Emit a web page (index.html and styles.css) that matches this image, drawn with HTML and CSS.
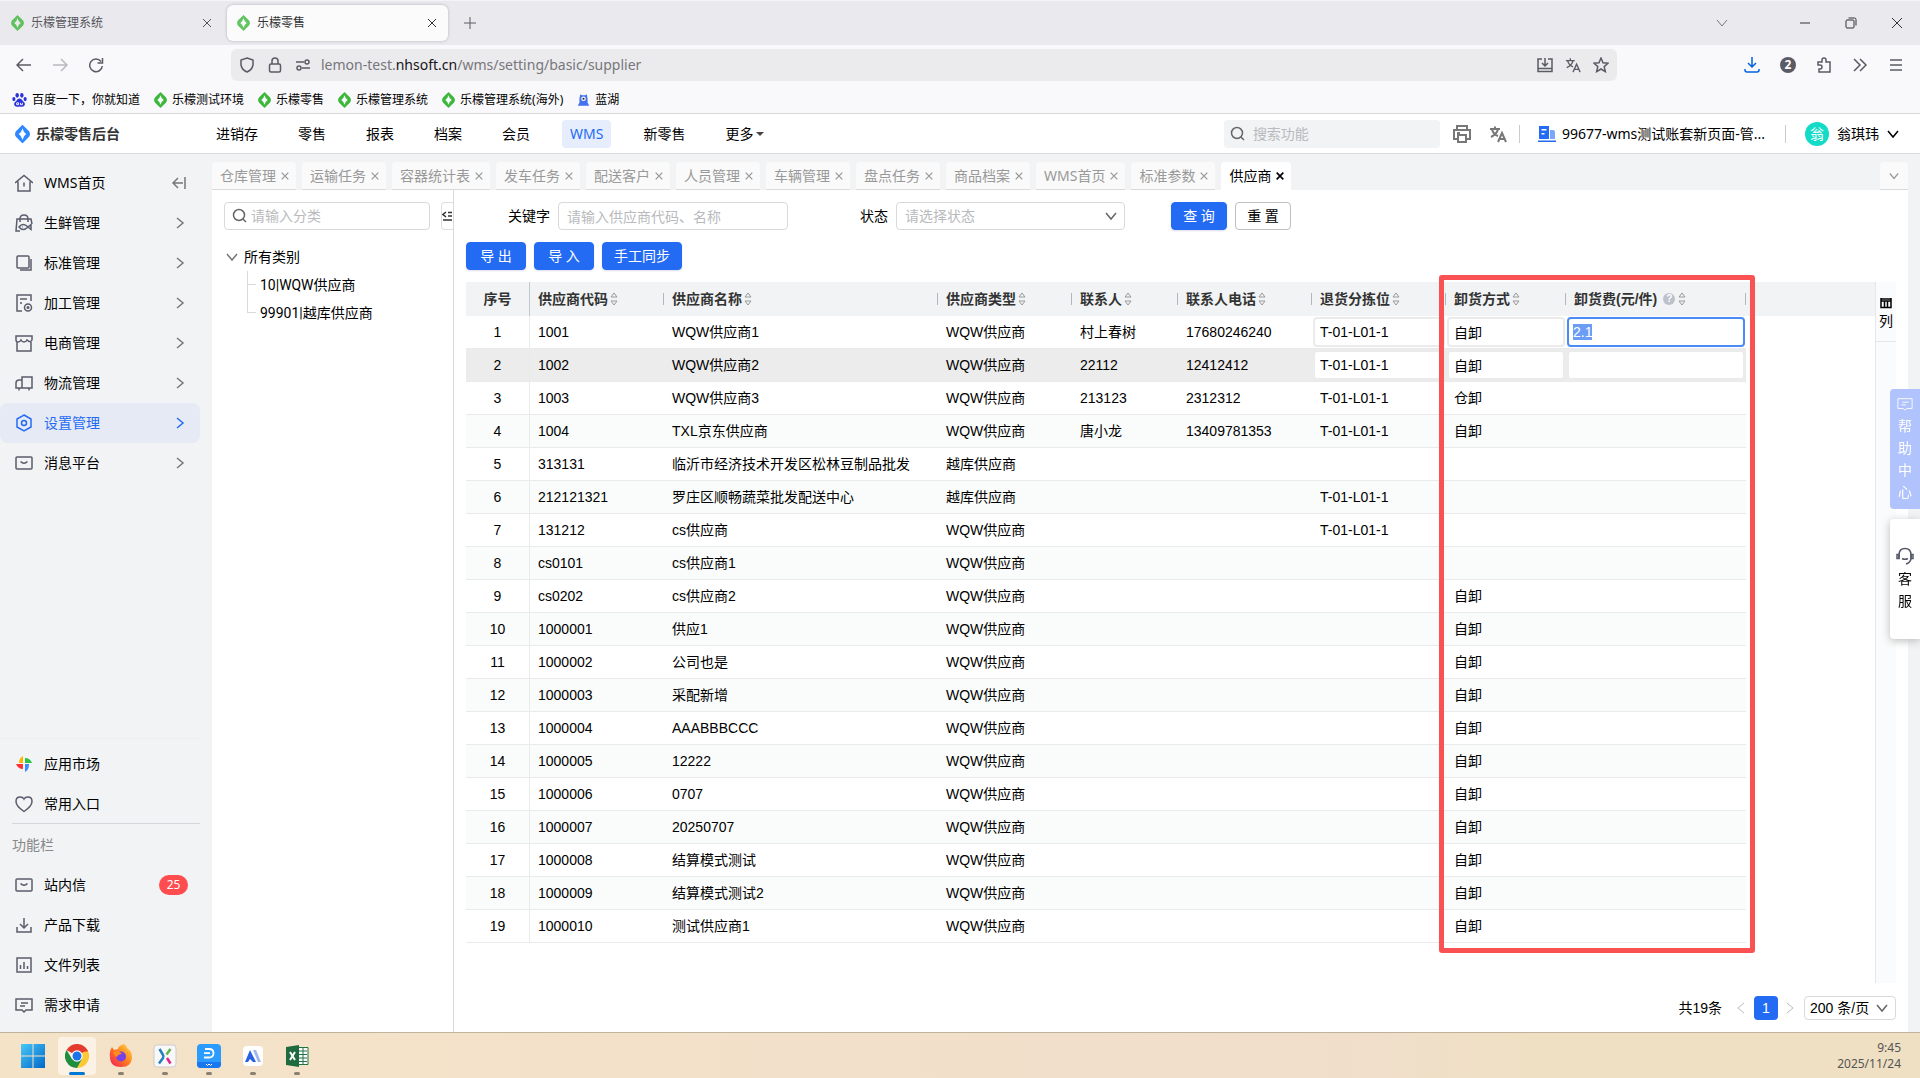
FILE: index.html
```html
<!DOCTYPE html>
<html lang="zh-CN">
<head>
<meta charset="utf-8">
<meta name="viewport" content="width=device-width, initial-scale=1">
<title>乐檬零售</title>
<link rel="stylesheet" href="styles.css">
</head>
<body>
<svg class="sprite" aria-hidden="true">
  <symbol id="lemon" viewBox="0 0 16 20"><path fill-rule="evenodd" d="M8 0l7 7q2 3 0 6l-7 7-7-7q-2-3 0-6zM8 4q-1 4-4 6 3 2 4 6 1-4 4-6-3-2-4-6z"/></symbol>
  <symbol id="x" viewBox="0 0 12 12"><path d="M2 2l8 8M10 2l-8 8"/></symbol>
  <symbol id="down" viewBox="0 0 12 12"><path d="M1 3l5 6 5-6"/></symbol>
  <symbol id="right" viewBox="0 0 12 12"><path d="M3 1l6 5-6 5"/></symbol>
  <symbol id="left" viewBox="0 0 12 12"><path d="M9 1L3 6l6 5"/></symbol>
  <symbol id="search" viewBox="0 0 16 16"><circle cx="7" cy="7" r="5.5"/><path d="M11 11l3 3"/></symbol>
  <symbol id="translate" viewBox="0 0 18 18"><path d="M1 4h10M6 1.500v2.500M3 4q1 5 6 7M9 4q-1 5-7 8M9 17l4-9 4 9M10.500 14h5"/></symbol>
  <symbol id="sort" viewBox="0 0 8 14"><path d="M1 5l3-4 3 4zM1 9l3 4 3-4z"/></symbol>
  <symbol id="mail" viewBox="0 0 18 18"><rect x="1" y="3" width="16" height="12" rx="1"/><path d="M5.500 7.500q3.500 3.500 7 0"/></symbol>
  <symbol id="note" viewBox="0 0 18 18"><path d="M1 3h16v11h-6l-2 2-2-2H1zM6 7h7M5 10h5"/></symbol>
</svg>

<header class="browser">
  <div class="tabstrip">
    <div class="btab"><svg class="fav"><use href="#lemon"/></svg><span>乐檬管理系统</span><svg class="i12 end"><use href="#x"/></svg></div>
    <div class="btab current"><svg class="fav"><use href="#lemon"/></svg><span>乐檬零售</span><svg class="i12 end"><use href="#x"/></svg></div>
    <button class="plain newtab" aria-label="新标签页"><svg class="i14" viewBox="0 0 14 14"><path d="M7 1v12M1 7h12"/></svg></button>
    <div class="winctl">
      <svg class="i12 listall"><use href="#down"/></svg>
      <svg class="i12" viewBox="0 0 12 12"><path d="M1 6h10"/></svg>
      <svg class="i12" viewBox="0 0 12 12"><rect x="1" y="3" width="8" height="8" rx="1"/><path d="M3.500 1h6q1.500 0 1.500 1.500v6"/></svg>
      <svg class="i12" viewBox="0 0 12 12"><path d="M1 1l10 10M11 1L1 11"/></svg>
    </div>
  </div>
  <div class="toolbar">
    <div class="navbtns">
      <svg class="i16" viewBox="0 0 16 16"><path d="M15 8H1M7 2L1 8l6 6"/></svg>
      <svg class="i16 dim" viewBox="0 0 16 16"><path d="M1 8h14M9 2l6 6-6 6"/></svg>
      <svg class="i16" viewBox="0 0 16 16"><path d="M13 4.500A6.300 6.300 0 1 0 14.300 9M14.500 1v5h-5"/></svg>
    </div>
    <div class="urlbar">
      <svg class="i16" viewBox="0 0 16 16"><path d="M8 1l6 2v5q-1 5-6 7-5-2-6-7V3z"/></svg>
      <svg class="i16" viewBox="0 0 16 16"><rect x="2.500" y="7" width="11" height="8" rx="1.500"/><path d="M5 7V4q0-3 3-3t3 3v3"/></svg>
      <svg class="i16" viewBox="0 0 16 16"><path d="M1 5h8M7 11h8M1 5"/><circle cx="12" cy="5" r="2"/><circle cx="4" cy="11" r="2"/></svg>
      <div class="url">lemon-test.<b>nhsoft.cn</b>/wms/setting/basic/supplier</div>
      <svg class="i16" viewBox="0 0 16 16"><path d="M5 2H1v12.500h14V2h-4M1 11.500h14M8 1v7M5 6l3 3 3-3"/></svg>
      <svg class="i16"><use href="#translate"/></svg>
      <svg class="i16" viewBox="0 0 16 16"><path d="M8 1l2 4.700 5 .5-3.800 3.400 1.100 5L8 12l-4.300 2.600 1.100-5L1 6.200l5-.5z"/></svg>
    </div>
    <div class="tools">
      <svg class="i16 blue" viewBox="0 0 16 16"><path d="M8 0v10M4 6l4 4 4-4M1 12v1q0 2 2 2h10q2 0 2-2v-1"/></svg>
      <span class="count">2</span>
      <svg class="i16" viewBox="0 0 16 16"><path d="M2 5h4V3q0-2 2-2t2 2v2h4v10H3v-3h1q2 0 2-2t-2-2H2z"/></svg>
      <svg class="i16" viewBox="0 0 16 16"><path d="M2 2l6 6-6 6M8 2l6 6-6 6"/></svg>
      <svg class="i16" viewBox="0 0 16 16"><path d="M2 3h12M2 8h12M2 13h12"/></svg>
    </div>
  </div>
  <nav class="bookmarks">
    <a href="#"><svg class="fav baidu" viewBox="0 0 16 16"><ellipse cx="5.500" cy="3" rx="1.800" ry="2.500"/><ellipse cx="10.500" cy="3" rx="1.800" ry="2.500"/><ellipse cx="2" cy="7" rx="1.700" ry="2.200"/><ellipse cx="14" cy="7" rx="1.700" ry="2.200"/><path d="M8 6.500q2 0 3.500 2.500 3 2 2 4.500-1.500 2.500-5.500 1.500-4 1-5.500-1.500-1-2.500 2-4.500Q6 6.500 8 6.500z"/><path d="M5 11h2v2H5zM9 11v2h2v-2" fill="none" stroke="#fff"/></svg>百度一下，你就知道</a>
    <a href="#"><svg class="fav"><use href="#lemon"/></svg>乐檬测试环境</a>
    <a href="#"><svg class="fav"><use href="#lemon"/></svg>乐檬零售</a>
    <a href="#"><svg class="fav"><use href="#lemon"/></svg>乐檬管理系统</a>
    <a href="#"><svg class="fav"><use href="#lemon"/></svg>乐檬管理系统(海外)</a>
    <a href="#"><svg class="fav lanhu" viewBox="0 0 16 16"><path d="M4 1l2 1h4l2-1 1 5v5l2 4H1l2-4V6z"/><circle cx="8" cy="6.500" r="2.800" fill="#fff"/><circle cx="8" cy="6.500" r="1.300" fill="#223"/></svg>蓝湖</a>
  </nav>
</header>

<div class="apphead">
  <a class="brand" href="#"><svg viewBox="0 0 16 20"><use href="#lemon"/></svg>乐檬零售后台</a>
  <nav class="mainnav">
    <a href="#">进销存</a><a href="#">零售</a><a href="#">报表</a><a href="#">档案</a><a href="#">会员</a><a href="#" class="on">WMS</a><a href="#">新零售</a><a href="#">更多<i class="caret"></i></a>
  </nav>
  <div class="headright">
    <label class="fsearch"><svg class="i16"><use href="#search"/></svg><input type="text" placeholder="搜索功能" aria-label="搜索功能"></label>
    <button class="plain" aria-label="打印"><svg class="i18" viewBox="0 0 18 18"><path d="M4 5V1h10v4M4 14H1V5h16v9h-3M5 10h8v7H5zM4 8h3"/></svg></button>
    <button class="plain" aria-label="语言"><svg class="i18"><use href="#translate"/></svg></button>
    <i class="vline"></i>
    <a class="org" href="#"><svg class="i18 solid" viewBox="0 0 18 18"><path fill-rule="evenodd" d="M1 1h10v13H1zM3.500 4v1.500h5V4zm0 4v1.500h3V8zM0 15.500h18V17H0z"/><path opacity=".6" d="M12 5h3q2 0 2 2v7h-5z"/></svg>99677-wms测试账套新页面-管...</a>
    <i class="vline"></i>
    <button class="plain user"><span class="avatar">翁</span>翁琪玮<svg class="i12"><use href="#down"/></svg></button>
  </div>
</div>

<div class="app">
  <aside class="side">
    <nav>
      <a href="#"><svg class="i18" viewBox="0 0 18 18"><path d="M0 9l9-7.500L18 9M3 7.500V17h12V7.500M9 8.500v4"/></svg>WMS首页<svg class="i14 tail" viewBox="0 0 14 14"><path d="M13 1v12M11 7H1M6 2L1 7l5 5"/></svg></a>
      <a href="#"><svg class="i18" viewBox="0 0 18 18"><path d="M5 17H1L2 5h14l1 5M5 8V5q0-4 4-4t4 4v3"/><path d="M4 13q4-5 9 0l3-2.500v5L13 13q-5 5-9 0zM7 13h.5"/></svg>生鲜管理<svg class="i12 tail"><use href="#right"/></svg></a>
      <a href="#"><svg class="i18" viewBox="0 0 18 18"><rect x="2" y="2" width="12" height="12" rx="1"/><path d="M16 5v11H5"/></svg>标准管理<svg class="i12 tail"><use href="#right"/></svg></a>
      <a href="#"><svg class="i18" viewBox="0 0 18 18"><path d="M7 17H2V1h14v6M5 5h7M5 9h2"/><circle cx="13" cy="13.500" r="3.500"/><circle cx="13" cy="13.500" r=".8"/></svg>加工管理<svg class="i12 tail"><use href="#right"/></svg></a>
      <a href="#"><svg class="i18" viewBox="0 0 18 18"><path d="M1 2h16v4q-1 2-3 1.500L12 6q-1 2-3 2T6 6q-1 2-3 2T1 6zM2 8v9h14V8"/></svg>电商管理<svg class="i12 tail"><use href="#right"/></svg></a>
      <a href="#"><svg class="i18" viewBox="0 0 18 18"><path d="M7 14V3h10v11zM7 6H3.500Q1 6.500 1 9v5h6M4 14v2.500M14 14v2.500"/></svg>物流管理<svg class="i12 tail"><use href="#right"/></svg></a>
      <a href="#" class="on"><svg class="i18" viewBox="0 0 18 18"><path d="M9 1l7 4v8l-7 4-7-4V5z"/><circle cx="9" cy="9" r="2.500"/></svg>设置管理<svg class="i12 tail"><use href="#right"/></svg></a>
      <a href="#"><svg class="i18"><use href="#mail"/></svg>消息平台<svg class="i12 tail"><use href="#right"/></svg></a>
    </nav>
    <nav class="foot">
      <a href="#"><svg class="i18 pin" viewBox="0 0 18 18"><path fill="#ffb400" d="M8 8H4q0-5 4-7z"/><path fill="#28c445" d="M10 8V3q5 0 7 5z"/><path fill="#f33" d="M8 9v5q-5 0-7-5z"/><path fill="#3b8cff" d="M10 9h4q0 6-4 8z"/></svg>应用市场</a>
      <a href="#" class="ruled"><svg class="i18" viewBox="0 0 18 18"><path d="M9 16.500Q1 11 1 6.500 1 2 5 2q3 0 4 2 1-2 4-2 4 0 4 4.500 0 4.500-8 10z"/></svg>常用入口</a>
      <h2>功能栏</h2>
      <a href="#"><svg class="i18"><use href="#mail"/></svg>站内信<span class="badge">25</span></a>
      <a href="#"><svg class="i18" viewBox="0 0 18 18"><path d="M9 2v9M5 8l4 4 4-4M2 11v5h14v-5"/></svg>产品下载</a>
      <a href="#"><svg class="i18" viewBox="0 0 18 18"><rect x="2" y="2" width="14" height="14"/><path d="M5.500 9v4M9 6v7M12.500 10v3"/></svg>文件列表</a>
      <a href="#"><svg class="i18"><use href="#note"/></svg>需求申请</a>
    </nav>
  </aside>

  <main class="work">
    <div class="ptabs">
      <button>仓库管理<svg class="i10"><use href="#x"/></svg></button><button>运输任务<svg class="i10"><use href="#x"/></svg></button><button>容器统计表<svg class="i10"><use href="#x"/></svg></button><button>发车任务<svg class="i10"><use href="#x"/></svg></button><button>配送客户<svg class="i10"><use href="#x"/></svg></button><button>人员管理<svg class="i10"><use href="#x"/></svg></button><button>车辆管理<svg class="i10"><use href="#x"/></svg></button><button>盘点任务<svg class="i10"><use href="#x"/></svg></button><button>商品档案<svg class="i10"><use href="#x"/></svg></button><button>WMS首页<svg class="i10"><use href="#x"/></svg></button><button>标准参数<svg class="i10"><use href="#x"/></svg></button><button class="on">供应商<svg class="i10"><use href="#x"/></svg></button>
      <button class="more" aria-label="更多页签"><svg class="i10"><use href="#down"/></svg></button>
    </div>
    <div class="page">
      <section class="tree">
        <div class="treebar">
          <label class="field tsearch"><svg class="i16"><use href="#search"/></svg><input type="text" placeholder="请输入分类" aria-label="分类"></label>
          <button class="fold" aria-label="收起"><svg viewBox="0 0 10 12" width="10" height="12"><path d="M4 2L1 4.500 4 7M6 2.500h4M6 6h4M1 10h9"/></svg></button>
        </div>
        <div class="root"><svg class="i12"><use href="#down"/></svg>所有类别</div>
        <ul><li>10|WQW供应商</li><li>99901|越库供应商</li></ul>
      </section>

      <section class="list">
        <form class="filters">
          <label for="kw">关键字</label>
          <input id="kw" class="field" type="text" placeholder="请输入供应商代码、名称">
          <label for="st" class="second">状态</label>
          <span class="selwrap"><select id="st" class="field empty"><option>请选择状态</option></select><svg class="i12"><use href="#down"/></svg></span>
          <button type="button" class="btn primary query">查 询</button>
          <button type="button" class="btn">重 置</button>
        </form>
        <div class="actions">
          <button class="btn primary">导 出</button><button class="btn primary">导 入</button><button class="btn primary">手工同步</button>
        </div>
        <div class="grid">
          <div class="gridmain">
            <table>
              <colgroup><col class="w64"><col class="w134"><col class="w274"><col class="w134"><col class="w106"><col class="w134"><col class="w134"><col class="w120"><col class="w180"><col></colgroup>
              <thead><tr><th>序号</th><th><div>供应商代码<svg class="sort"><use href="#sort"/></svg></div></th><th><div>供应商名称<svg class="sort"><use href="#sort"/></svg></div></th><th><div>供应商类型<svg class="sort"><use href="#sort"/></svg></div></th><th><div>联系人<svg class="sort"><use href="#sort"/></svg></div></th><th><div>联系人电话<svg class="sort"><use href="#sort"/></svg></div></th><th><div>退货分拣位<svg class="sort"><use href="#sort"/></svg></div></th><th><div>卸货方式<svg class="sort"><use href="#sort"/></svg></div></th><th><div>卸货费(元/件)<span class="tip">?</span><svg class="sort"><use href="#sort"/></svg></div></th><th></th></tr></thead>
              <tbody>
                <tr><td>1</td><td>1001</td><td>WQW供应商1</td><td>WQW供应商</td><td>村上春树</td><td>17680246240</td><td class="ed"><input aria-label="退货分拣位" value="T-01-L01-1"></td><td class="ed"><input aria-label="卸货方式" value="自卸"></td><td class="ed"><input id="fee" class="active" aria-label="卸货费" value="2.1"></td><td></td></tr>
                <tr class="hover"><td>2</td><td>1002</td><td>WQW供应商2</td><td>WQW供应商</td><td>22112</td><td>12412412</td><td class="ed"><input aria-label="退货分拣位" value="T-01-L01-1"></td><td class="ed"><input aria-label="卸货方式" value="自卸"></td><td class="ed"><input aria-label="卸货费" value=""></td><td></td></tr>
                <tr><td>3</td><td>1003</td><td>WQW供应商3</td><td>WQW供应商</td><td>213123</td><td>2312312</td><td>T-01-L01-1</td><td>仓卸</td><td></td><td></td></tr>
                <tr><td>4</td><td>1004</td><td>TXL京东供应商</td><td>WQW供应商</td><td>唐小龙</td><td>13409781353</td><td>T-01-L01-1</td><td>自卸</td><td></td><td></td></tr>
                <tr><td>5</td><td>313131</td><td>临沂市经济技术开发区松林豆制品批发</td><td>越库供应商</td><td></td><td></td><td></td><td></td><td></td><td></td></tr>
                <tr><td>6</td><td>212121321</td><td>罗庄区顺畅蔬菜批发配送中心</td><td>越库供应商</td><td></td><td></td><td>T-01-L01-1</td><td></td><td></td><td></td></tr>
                <tr><td>7</td><td>131212</td><td>cs供应商</td><td>WQW供应商</td><td></td><td></td><td>T-01-L01-1</td><td></td><td></td><td></td></tr>
                <tr><td>8</td><td>cs0101</td><td>cs供应商1</td><td>WQW供应商</td><td></td><td></td><td></td><td></td><td></td><td></td></tr>
                <tr><td>9</td><td>cs0202</td><td>cs供应商2</td><td>WQW供应商</td><td></td><td></td><td></td><td>自卸</td><td></td><td></td></tr>
                <tr><td>10</td><td>1000001</td><td>供应1</td><td>WQW供应商</td><td></td><td></td><td></td><td>自卸</td><td></td><td></td></tr>
                <tr><td>11</td><td>1000002</td><td>公司也是</td><td>WQW供应商</td><td></td><td></td><td></td><td>自卸</td><td></td><td></td></tr>
                <tr><td>12</td><td>1000003</td><td>采配新增</td><td>WQW供应商</td><td></td><td></td><td></td><td>自卸</td><td></td><td></td></tr>
                <tr><td>13</td><td>1000004</td><td>AAABBBCCC</td><td>WQW供应商</td><td></td><td></td><td></td><td>自卸</td><td></td><td></td></tr>
                <tr><td>14</td><td>1000005</td><td>12222</td><td>WQW供应商</td><td></td><td></td><td></td><td>自卸</td><td></td><td></td></tr>
                <tr><td>15</td><td>1000006</td><td>0707</td><td>WQW供应商</td><td></td><td></td><td></td><td>自卸</td><td></td><td></td></tr>
                <tr><td>16</td><td>1000007</td><td>20250707</td><td>WQW供应商</td><td></td><td></td><td></td><td>自卸</td><td></td><td></td></tr>
                <tr><td>17</td><td>1000008</td><td>结算模式测试</td><td>WQW供应商</td><td></td><td></td><td></td><td>自卸</td><td></td><td></td></tr>
                <tr><td>18</td><td>1000009</td><td>结算模式测试2</td><td>WQW供应商</td><td></td><td></td><td></td><td>自卸</td><td></td><td></td></tr>
                <tr><td>19</td><td>1000010</td><td>测试供应商1</td><td>WQW供应商</td><td></td><td></td><td></td><td>自卸</td><td></td><td></td></tr>
              </tbody>
            </table>
            <div class="callout"></div>
          </div>
          <div class="colpanel"><button class="plain"><svg width="12" height="12" viewBox="0 0 12 12"><path d="M1 2h10M1 4h10M1 1v9.500h10V1M4.500 4v6M7.500 4v6"/></svg>列</button></div>
        </div>
        <div class="pager">
          <span>共19条</span>
          <button class="plain arrow" aria-label="上一页"><svg class="i12"><use href="#left"/></svg></button>
          <button class="cur">1</button>
          <button class="plain arrow" aria-label="下一页"><svg class="i12"><use href="#right"/></svg></button>
          <span class="selwrap"><select class="field" aria-label="每页条数"><option>200 条/页</option></select><svg class="i12"><use href="#down"/></svg></span>
        </div>
      </section>
    </div>
  </main>
</div>

<div class="floaters">
  <button class="help"><svg class="i16"><use href="#note"/></svg><span>帮助中心</span></button>
  <button class="service"><svg class="i18" viewBox="0 0 18 18"><path d="M3 12V8q0-6.500 6-6.500T15 8v4q-1 4-5 5M6 11.500q3 1.500 6 0"/><path d="M3 7.500H1v4h2zM15 7.500h2v4h-2z"/></svg><span>客服</span></button>
</div>

<footer class="taskbar">
  <div class="apps">
    <span class="task"><svg viewBox="0 0 24 24"><defs><linearGradient id="win" x1="0" y1="0" x2="1" y2="1"><stop offset="0" stop-color="#48c8f8"/><stop offset="1" stop-color="#0067c8"/></linearGradient></defs><path fill="url(#win)" d="M0 0h11.500v11.500H0zM12.500 0H24v11.500H12.500zM0 12.500h11.500V24H0zM12.500 12.500H24V24H12.500z"/></svg></span>
    <span class="task open focus"><svg viewBox="0 0 24 24"><path fill="#e33b2e" d="M12 12L1.600 6A12 12 0 0 1 22.400 6z"/><path fill="#fcc934" d="M12 12l10.400-6A12 12 0 0 1 12 24l5-9z"/><path fill="#1e8e3e" d="M12 12l5 3-5 9A12 12 0 0 1 1.600 6L7 15z"/><path fill="#e33b2e" d="M1.600 6H22.400l.6 1.500H12z"/><circle cx="12" cy="12" r="5.700" fill="#fff"/><circle cx="12" cy="12" r="4.500" fill="#1a73e8"/></svg></span>
    <span class="task open"><svg viewBox="0 0 24 24"><defs><linearGradient id="fx" x1="1" y1="0" x2="0" y2="1"><stop offset="0" stop-color="#ffe24a"/><stop offset=".5" stop-color="#ff7a1c"/><stop offset="1" stop-color="#f0175f"/></linearGradient></defs><path fill="url(#fx)" d="M15 0q3 2 3 4 5 3 5 9 0 10-11 10T1 13Q0 8 3 3l2 3 4-1q0-3 6-5z"/><circle cx="12" cy="12.500" r="5" fill="#7542e5"/><path fill="#ff8a1e" d="M4 8q6-2 9 2-4 0-5 3-3-1-4-5z"/></svg></span>
    <span class="task open"><svg viewBox="0 0 24 24"><rect x="1" y="1" width="22" height="22" rx="3" fill="#f8f8f8" stroke="#ccc"/><path d="M17.500 5l-4 5.500" stroke="#61b34b" stroke-width="2.500"/><path d="M6.500 5l3.500 6q1 1.500 0 3l-4 5.500" fill="none" stroke="#2380bd" stroke-width="2.500"/><path d="M14 14l3.500 5.500" stroke="#e2218a" stroke-width="2.500"/></svg></span>
    <span class="task open"><svg viewBox="0 0 24 24"><rect width="24" height="24" rx="4" fill="#2b9bff"/><path d="M0 18h24v2q0 4-4 4H4q-4 0-4-4z" fill="#1977f0"/><path d="M8 5h4q4.500 0 4.500 4.200T12 13.500H7M7 9.200h6" fill="none" stroke="#fff" stroke-width="1.800"/><path d="M9 20l1.500 1.500L12 20l1.500 1.500L15 20" fill="none" stroke="#fff"/></svg></span>
    <span class="task open"><svg viewBox="0 0 24 24"><rect x="2" y="2" width="20" height="20" rx="4" fill="#fff"/><path fill="#2b62e3" d="M9 6l6 12h-3l-3-3-2 3H4z"/><path fill="#9db7f5" d="M12 6h3l5 12h-3z"/></svg></span>
    <span class="task open"><svg viewBox="0 0 24 24"><path fill="#fff" stroke="#217346" d="M12 3.500h11v17H12z"/><path stroke="#217346" d="M13 7h9M13 10.500h9M13 14h9M13 17.500h9M18 4v16"/><path fill="#1d6b3f" d="M1 3l13-2v22L1 21z"/><path d="M5 8l5 8M10 8l-5 8" stroke="#fff" stroke-width="2"/></svg></span>
  </div>
  <div class="clock"><span>9:45</span><span>2025/11/24</span></div>
</footer>
<script src="main.js"></script>
</body>
</html>
```
FILE: styles.css
```css
* { box-sizing: border-box; }
body {
  margin: 0;
  min-height: 100vh;
  display: flex;
  flex-direction: column;
  font: 14px/20px "Noto Sans", "Noto Sans CJK SC", sans-serif;
  color: #000;
  background: #f1f3f5;
}
a { color: inherit; text-decoration: none; }
button, input, select { font: inherit; color: inherit; }
svg { flex: none; fill: none; stroke: currentColor; }
ul { margin: 0; padding: 0; list-style: none; }
.sprite { position: absolute; width: 0; height: 0; }
.i10 { width: 10px; height: 10px; }
.i12 { width: 12px; height: 12px; }
.i14 { width: 14px; height: 14px; }
.i16 { width: 16px; height: 16px; }
.i18 { width: 18px; height: 18px; }
.plain { display: flex; align-items: center; padding: 0; border: 0; background: none; }

/* browser frame */
.browser { background: #f9f9fb; border-bottom: 1px solid #d9d9dc; font-size: 12px; color: #15141a; }
.tabstrip { display: flex; align-items: center; height: 45px; background: #eae9ee; border-top: 1px solid #f4f4f6; }
.btab { display: flex; align-items: center; gap: 7px; width: 221px; height: 36px; margin-right: 6px; padding: 0 8px 0 11px; border-radius: 6px; color: #55545c; }
.btab.current { padding: 0 10px; background: #fbfbfc; box-shadow: 0 0 3px #b0b0b6; color: #333; }
.btab .fav { opacity: .8; }
.fav { width: 13px; height: 16px; fill: #3eb83b; stroke: none; }
.end { margin-left: auto; }
.newtab { margin-left: 9px; color: #5b5b66; }
.winctl { display: flex; gap: 34px; margin-left: auto; margin-right: 17px; color: #333; }
.listall { margin-right: 37px; color: #777; }
.toolbar { display: flex; align-items: center; height: 40px; padding: 0 16px; color: #5b5b66; }
.toolbar svg { stroke-width: 1.5px; }
.navbtns { display: flex; gap: 20px; width: 215px; }
.dim { opacity: .4; }
.urlbar { display: flex; flex: 1; align-items: center; gap: 12px; height: 32px; padding: 0 8px; border-radius: 6px; background: #ebebed; }
.url { flex: 1; margin-left: -2px; font-size: 14px; color: #77767c; }
.url b { font-weight: 400; color: #15141a; }
.tools { display: flex; align-items: center; gap: 20px; margin-left: 127px; }
.tools .blue { color: #0061e0; }
.count { width: 16px; height: 16px; border-radius: 8px; background: #5b5b66; color: #fff; font-weight: 700; line-height: 16px; text-align: center; }
.bookmarks { display: flex; gap: 14px; height: 28px; padding: 2px 12px 0; align-items: center; color: #000; }
.bookmarks a { display: flex; align-items: center; gap: 5px; }
.baidu { width: 15px; fill: #2a32dc; }
.lanhu { fill: #4473f0; }

/* application header */
.apphead { display: flex; align-items: center; height: 40px; padding: 0 21px 0 15px; background: #fff; border-bottom: 1px solid #d9dbdd; }
.brand { display: flex; align-items: center; gap: 6px; width: 193px; font-weight: 700; color: #333; }
.brand svg { width: 15px; height: 20px; fill: #2f88ff; stroke: none; }
.mainnav { display: flex; gap: 24px; }
.mainnav a { display: flex; align-items: center; height: 28px; padding: 0 8px; border-radius: 4px; }
.mainnav .on { background: #e6edfc; color: #246bf4; }
.caret { margin-left: 3px; border: 4px solid transparent; border-top-color: #444; border-bottom: 0; }
.headright { display: flex; align-items: center; margin-left: auto; }
.headright .plain { margin-left: 13px; color: #777; stroke-width: 2px; }
.headright .plain + .plain { margin-left: 18px; }
.fsearch { display: flex; align-items: center; gap: 7px; width: 216px; height: 28px; padding: 0 6px; border-radius: 4px; background: #f1f3f5; color: #666; }
.fsearch svg, .tsearch svg { stroke-width: 1.5px; }
.fsearch input, .tsearch input { flex: 1; min-width: 0; padding: 0; border: 0; outline: 0; background: none; }
::placeholder { color: #b8babd; opacity: 1; }
.vline { width: 1px; height: 18px; margin: 0 18px 0 12px; background: #ccc; }
.org { display: flex; align-items: center; gap: 6px; }
.solid { fill: #246bf4; stroke: none; }
.org + .vline { margin: 0 6px 0 20px; }
.headright .user { gap: 8px; color: #000; }
.user .i12 { stroke-width: 1.5px; }
.avatar { width: 24px; height: 24px; border-radius: 12px; background: #13dbc8; color: #fff; line-height: 24px; text-align: center; }

/* side menu */
.app { display: flex; flex: 1; padding-right: 12px; }
.side { display: flex; flex-direction: column; justify-content: space-between; width: 212px; padding: 9px 12px 7px 0; }
.side a { display: flex; align-items: center; gap: 11px; height: 40px; padding: 0 14px 0 15px; border-radius: 8px; }
.side svg { color: #5a5d6b; stroke-width: 1.5px; }
.side .on, .side .on svg { color: #246bf4; }
.side .on { background: #e6eaf5; }
.side .tail { margin-left: auto; color: #777; }
.side .pin { stroke: none; }
.side .foot { border-top: 1px solid #eceeef; padding-top: 5px; }
.side .ruled { position: relative; }
.side .ruled::after { content: ""; position: absolute; inset: auto 0 0 12px; height: 1px; background: #d5d7da; }
.side h2 { margin: 0; padding: 0 12px; font-size: 14px; font-weight: 400; line-height: 41px; color: #888; }
.badge { width: 29px; margin: 0 -2px 0 auto; border-radius: 10px; background: #ff4d4f; color: #fff; font-size: 12px; text-align: center; }

/* page tabs */
.work { display: flex; flex: 1; flex-direction: column; min-width: 0; }
.ptabs { display: flex; align-items: flex-end; gap: 6px; height: 36px; }
.ptabs button { display: flex; align-items: center; gap: 4px; height: 28px; padding: 0 6px 0 8px; border: 0; border-bottom: 1px solid #d8dadc; border-radius: 4px 4px 0 0; background: #fafafa; color: #999; white-space: nowrap; }
.ptabs .i10 { stroke-width: 1.5px; }
.ptabs .on { border-color: #fff; background: #fff; color: #000; }
.ptabs .on .i10 { stroke-width: 2px; }
.ptabs .more { width: 28px; margin-left: auto; padding: 0 9px; }
.page { display: flex; flex: 1; background: #fff; }

/* category tree */
.tree { width: 242px; padding: 12px 0 0 12px; border-right: 1px solid #d9d9d9; }
.treebar { display: flex; justify-content: space-between; }
.field { height: 28px; padding: 0 8px; border: 1px solid #d9d9d9; border-radius: 4px; background: #fff; }
.tsearch { display: flex; align-items: center; gap: 3px; width: 206px; padding: 0 7px; color: #666; }
.fold { display: flex; align-items: center; width: 12px; height: 28px; padding: 0; border: 1px solid #ddd; border-right: 0; border-radius: 4px 0 0 4px; background: #fff; color: #333; }
.fold svg { stroke-width: 1.5px; }
.root { display: flex; align-items: center; gap: 6px; height: 28px; margin-top: 13px; padding-left: 2px; }
.root svg { color: #777; stroke-width: 1.5px; }
.tree ul { margin-left: 23px; font-family: Roboto, "Noto Sans CJK SC", sans-serif; }
.tree li { height: 28px; padding-left: 13px; line-height: 28px; background: linear-gradient(#d9d9d9, #d9d9d9) 0 0 / 1px 100% no-repeat, linear-gradient(#d9d9d9, #d9d9d9) 0 13px / 9px 1px no-repeat; }
.tree li:last-child { background-size: 1px 14px, 9px 1px; }

/* supplier list */
.list { display: flex; flex: 1; flex-direction: column; min-width: 0; padding: 12px; }
.filters { display: flex; align-items: center; padding-left: 42px; }
.filters label { margin-right: 8px; }
.filters .second { margin-left: 72px; }
.filters input { width: 230px; }
.selwrap { position: relative; display: flex; }
.selwrap svg { position: absolute; right: 8px; top: 8px; color: #666; stroke-width: 1.5px; pointer-events: none; }
select { appearance: none; }
.filters select { width: 229px; }
.empty { color: #b8babd; }
.btn { height: 28px; padding: 0 11px; border: 1px solid #bfbfbf; border-radius: 4px; background: #fff; white-space: nowrap; }
.primary { border-color: #246bf4; background: #246bf4; color: #fff; box-shadow: 0 1px 2px #dde; }
.filters .btn { width: 56px; }
.filters .query { margin: 0 8px 0 46px; }
.actions { display: flex; gap: 8px; margin: 12px 0; }
.actions .btn { min-width: 60px; }
.grid { display: flex; flex: 1; }
.gridmain { position: relative; flex: 1; min-width: 0; }
table { width: 100%; table-layout: fixed; border-collapse: separate; border-spacing: 0; font-family: "Liberation Sans", "Noto Sans CJK SC", sans-serif; }
.w64 { width: 64px; } .w106 { width: 106px; } .w120 { width: 120px; } .w134 { width: 134px; } .w180 { width: 180px; } .w274 { width: 274px; }
th { height: 34px; padding: 0 0 0 8px; background: #f1f3f5; color: #333; text-align: left; white-space: nowrap; }
th div { display: flex; align-items: center; height: 12px; border-right: 1px solid #b4b8be; }
th:first-child { padding: 0; border-right: 1px solid #c4c7cb; text-align: center; }
.sort { width: 8px; height: 14px; margin-left: 2px; color: #999; }
.tip { width: 12px; height: 12px; margin: 0 1px 0 6px; border-radius: 6px; background: #bcc1cc; color: #fff; font-size: 10px; line-height: 12px; text-align: center; }
td { height: 33px; padding: 0 8px; border-bottom: 1px solid #e8eaeb; white-space: nowrap; }
td:first-child { padding: 0; border-right: 1px solid #e8eaeb; text-align: center; }
tbody tr:nth-child(even) td { background: #fafcfb; }
tbody tr.hover td { background: #ececec; }
tbody tr td:last-child { border: 0; background: #fff; }
.ed { padding: 0 1px; }
.ed input { display: block; width: 100%; height: 30px; padding: 0 5px; border: 2px solid #ebebeb; border-radius: 4px; outline: 0; background: #fff; }
.ed .active { padding: 0 4px; border-color: #4a8cf7; }
.ed .active::selection { background: #6b9df5; color: #fff; }
.callout { position: absolute; left: 973px; top: -7px; bottom: 30px; width: 316px; border: 5px solid #fa5252; border-radius: 3px; pointer-events: none; }
.colpanel { width: 21px; border-left: 1px solid #e4e6e8; background: #fafbfc; }
.colpanel button { flex-direction: column; gap: 2px; width: 20px; height: 60px; padding-top: 15px; border-bottom: 1px solid #e4e6e8; }
.colpanel svg { stroke-width: 1.5px; }
.pager { display: flex; align-items: center; justify-content: flex-end; margin-top: 13px; font-family: "Liberation Sans", "Noto Sans CJK SC", sans-serif; }
.arrow { color: #bbb; margin: 0 7px 0 13px; }
.cur { width: 24px; height: 24px; padding: 0; border: 0; border-radius: 4px; background: #246bf4; color: #fff; }
.cur + .arrow { margin: 0 8px 0 6px; }
.pager .field { width: 92px; height: 24px; padding: 0 5px; }
.pager .selwrap svg { top: 6px; }

/* floating helpers */
.floaters { position: fixed; right: 0; top: 389px; display: flex; flex-direction: column; gap: 10px; width: 30px; }
.floaters button { display: flex; flex-direction: column; align-items: center; justify-content: center; gap: 3px; height: 120px; padding: 0; border: 0; border-radius: 4px 0 0 4px; }
.floaters span { width: 14px; line-height: 22px; }
.help { background: #b1c3fd; color: #fff; }
.service { background: #fff; box-shadow: 0 2px 8px #bbb; }
.service svg { color: #555968; stroke-width: 1.5px; }

/* desktop taskbar */
.taskbar { display: flex; align-items: center; justify-content: space-between; height: 46px; padding: 0 19px 0 14px; border-top: 1px solid #bfb39d; background: linear-gradient(90deg, #f5e3c8, #f0decb 70%, #efe0c3 80%, #efdfc3); }
.apps { display: flex; gap: 6px; }
.task { position: relative; display: flex; align-items: center; justify-content: center; width: 38px; height: 38px; border-radius: 4px; }
.task svg { width: 24px; height: 24px; stroke: none; }
.task.focus { background: #fbf1e4; }
.task.open::after { content: ""; position: absolute; bottom: 0; width: 6px; height: 3px; border-radius: 2px; background: #8a8072; }
.task.focus::after { width: 16px; background: #0078d4; }
.clock { display: flex; flex-direction: column; align-items: flex-end; font-size: 12px; line-height: 16px; color: #555; }
```
FILE: main.js
```js
const fee = document.getElementById('fee');
fee.focus({ preventScroll: true });
fee.select();
```
